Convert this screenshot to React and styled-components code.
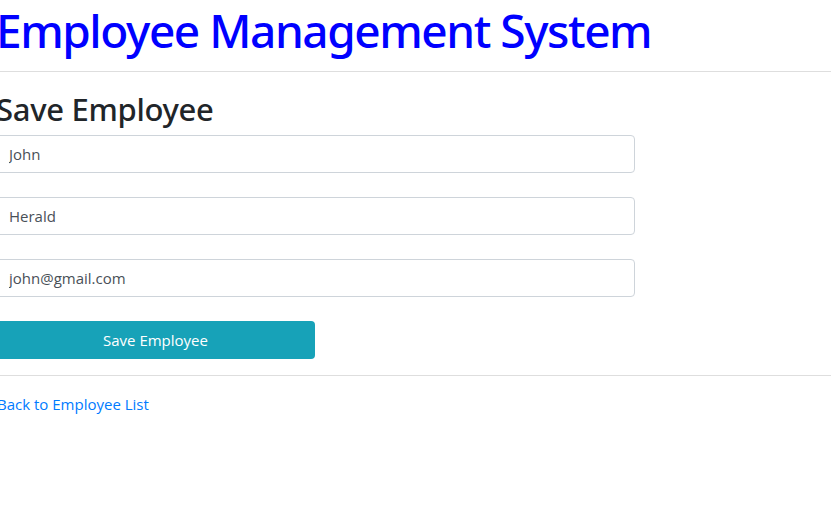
import React from 'react'
import styled, { createGlobalStyle } from 'styled-components'

const GlobalStyle = createGlobalStyle`
  body {
    margin: 0;
    background: #fff;
    font-family: "Open Sans", "Noto Sans", sans-serif;
    color: #212529;
  }
`

export default function App() {
  return (
    <>
      <GlobalStyle />
      <Page>
        <Title>Employee Management System</Title>
        <Rule gap={12} />
        <Heading>Save Employee</Heading>
        <Form onSubmit={(e) => e.preventDefault()}>
          <Input defaultValue="John" />
          <Input defaultValue="Herald" />
          <Input defaultValue="john@gmail.com" />
          <SaveButton type="submit">Save Employee</SaveButton>
        </Form>
        <Rule gap={16} />
        <BackLink href="#">Back to Employee List</BackLink>
      </Page>
    </>
  )
}

const Page = styled.div`
  margin-left: -4px;
  display: flex;
  flex-direction: column;
`

const Title = styled.h1`
  margin: 0;
  padding-top: 2px;
  font-family: "Noto Sans", "Open Sans", sans-serif;
  font-size: 46px;
  font-weight: 500;
  line-height: 57px;
  color: #0000ff;
  letter-spacing: -1.45px;
  white-space: nowrap;
`

const Rule = styled.hr`
  width: 100%;
  margin: ${(p) => p.gap}px 0 0;
  border: 0;
  border-top: 1px solid #dedede;
`

const Heading = styled.h2`
  margin: 17px 0 6px 0;
  font-family: "Noto Sans", "Open Sans", sans-serif;
  font-size: 31px;
  font-weight: 500;
  line-height: 40px;
  color: #212529;
  letter-spacing: -0.3px;
`

const Form = styled.form`
  display: flex;
  flex-direction: column;
  gap: 24px;
  width: 639px;
`

const Input = styled.input`
  box-sizing: border-box;
  height: 38px;
  width: 100%;
  padding: 0 12px;
  font: inherit;
  font-size: 15px;
  color: #495057;
  border: 1px solid #ced4da;
  border-radius: 4px;
  background: #fff;
  outline: none;
`

const SaveButton = styled.button`
  width: 319px;
  height: 38px;
  border: 0;
  border-radius: 4px;
  background: #17a2b8;
  color: #fff;
  font: inherit;
  font-size: 15px;
  cursor: pointer;
`

const BackLink = styled.a`
  margin-top: 18px;
  margin-left: 1px;
  font-size: 15px;
  color: #007bff;
  text-decoration: none;
`
